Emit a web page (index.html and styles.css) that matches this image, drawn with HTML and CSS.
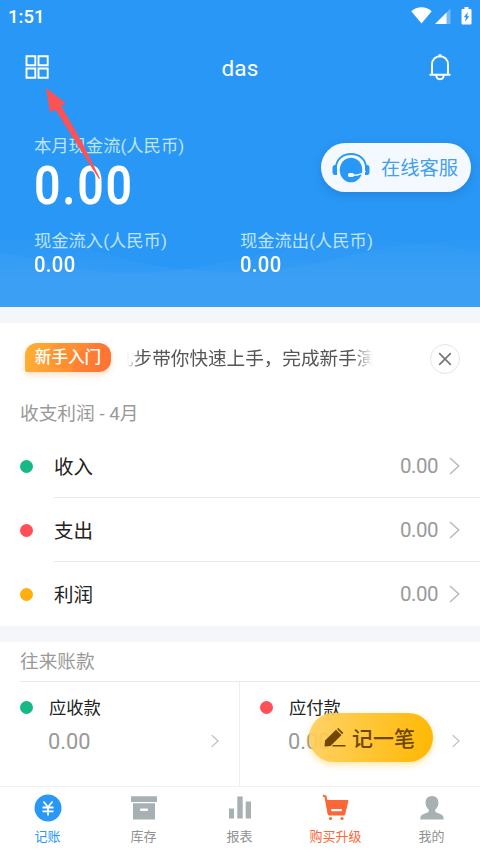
FILE: index.html
```html
<!DOCTYPE html>
<html lang="zh-CN">
<head>
<meta charset="utf-8">
<title>das</title>
<link rel="stylesheet" href="styles.css">
</head>
<body>
<div class="app">
  <header class="hero">
    <svg class="waves" viewBox="0 0 480 70" preserveAspectRatio="none" aria-hidden="true">
      <defs><linearGradient id="wave" x1="0" y1="0" x2="0" y2="1"><stop offset="0" stop-color="#fff" stop-opacity=".015"/><stop offset=".6" stop-color="#fff" stop-opacity=".045"/></linearGradient></defs>
      <path fill="url(#wave)" d="M0 3C70 3 90 14 130 23C175 34 215 36 260 34C330 29 380 3 480 3V70H0Z"/>
      <path fill="url(#wave)" d="M0 16C55 23 70 36 135 36C220 36 270 4 370 4C420 4 450 10 480 16V70H0Z"/>
    </svg>
    <div class="status">
      <span class="clock">1:51</span>
      <div class="status-icons">
        <svg class="wifi" width="21" height="17" viewBox="0 0 21 17"><path fill="#fff" d="M.3 4.2C6-1 15-1 20.700 4.200L10.500 16.500Z"/></svg>
        <svg class="signal" width="16" height="16" viewBox="0 0 16 16"><path fill="#fff" fill-opacity=".35" d="M10 6 15.500.5V16H10Z"/><path fill="#fff" d="M0 16 11.500 4.500V16Z"/></svg>
        <svg width="11" height="18" viewBox="0 0 11 18"><path fill="#fff" d="M3.500 0h4v2H9.500Q10.500 2 10.500 3V16.500Q10.500 17.500 9.500 17.500H1.500Q.5 17.500.5 16.500V3Q.5 2 1.500 2h2Z"/><path fill="#2997f5" d="M6.800 5 2.800 10.300H5L4 14.800 8.300 9.300H6.100Z"/></svg>
      </div>
    </div>
    <div class="titlebar">
      <svg width="24" height="24" viewBox="0 0 24 24" fill="none" stroke="#fff" stroke-width="1.900"><path d="M1.500 1.200H10.300V10.300H1.500ZM13.500 1.200H22.700V10.300H13.500ZM1.500 13.500H10.300V22.700H1.500ZM13.500 13.500H22.700V22.700H13.500Z"/></svg>
      <h1>das</h1>
      <svg width="22" height="27" viewBox="0 0 22 27" fill="none" stroke="#fff" stroke-width="1.900"><path d="M3 20.500V10.500C3 5.500 6.500 2.300 11 2.300S19 5.500 19 10.500V20.500M.5 20.800H21.500M7.300 21.200C7.300 26.500 14.700 26.500 14.700 21.200"/><circle cx="11" cy="1.700" r="1.600" fill="#fff" stroke="none"/></svg>
    </div>
    <div class="flow">
      <p class="label">本月现金流(人民币)</p>
      <p class="total">0.00</p>
      <div class="flow-split">
        <div><p class="label">现金流入(人民币)</p><p class="amount">0.00</p></div>
        <div><p class="label">现金流出(人民币)</p><p class="amount">0.00</p></div>
      </div>
    </div>
    <a class="service">
      <svg width="38" height="30" viewBox="0 0 38 30"><path fill="none" stroke="#2997f5" stroke-width="1.800" d="M4 14C4.500 6 11 1 19 1S33.500 6 34 14"/><path fill="#2997f5" d="M5 12V22H3Q.5 22 .5 19V15Q.5 12 3 12ZM33 12V22H35Q37.500 22 37.500 19V15Q37.500 12 35 12Z"/><ellipse cx="19" cy="17" rx="11.300" ry="12.300" fill="#2997f5"/><path fill="none" stroke="#f3f9ff" stroke-width="1.500" d="M20 22.200C26 22.500 31 20.500 33.500 18"/><rect x="16" y="20" width="6" height="4" rx="1.500" fill="#f3f9ff"/></svg>
      <span>在线客服</span>
    </a>
    <svg class="pointer" width="58" height="96" viewBox="0 0 58 96"><path fill="#fb5355" d="M2 2.700 22 18.500 17 20.500 39 59 56 93.500 55 94 34 61 11.500 24.500 6 27.500Z"/></svg>
  </header>

  <main>
    <section class="card profit">
      <div class="guide">
        <span class="badge">新手入门</span>
        <div class="marquee"><span>几步带你快速上手，完成新手演</span></div>
        <span class="close"><svg width="14" height="14" viewBox="0 0 14 14" fill="none" stroke="#777" stroke-width="1.700"><path d="M1.200 1.200 12.800 12.800M12.800 1.200 1.200 12.800"/></svg></span>
      </div>
      <h2>收支利润 - 4月</h2>
      <div class="row"><i class="dot green"></i><div class="row-body"><span class="name">收入</span><span class="value">0.00</span><svg class="chev" viewBox="0 0 11 18"><path d="M1 1 9.700 9 1 17"/></svg></div></div>
      <div class="row"><i class="dot red"></i><div class="row-body"><span class="name">支出</span><span class="value">0.00</span><svg class="chev" viewBox="0 0 11 18"><path d="M1 1 9.700 9 1 17"/></svg></div></div>
      <div class="row"><i class="dot amber"></i><div class="row-body"><span class="name">利润</span><span class="value">0.00</span><svg class="chev" viewBox="0 0 11 18"><path d="M1 1 9.700 9 1 17"/></svg></div></div>
    </section>

    <section class="card accounts">
      <h2>往来账款</h2>
      <div class="pair">
        <div class="account"><div class="account-name"><i class="dot green"></i>应收款</div><div class="account-value"><span>0.00</span><svg class="chev small" viewBox="0 0 11 18"><path d="M1 1 9.700 9 1 17"/></svg></div></div>
        <div class="account"><div class="account-name"><i class="dot red"></i>应付款</div><div class="account-value"><span>0.00</span><svg class="chev small" viewBox="0 0 11 18"><path d="M1 1 9.700 9 1 17"/></svg></div></div>
      </div>
      <a class="record">
        <svg width="22" height="19" viewBox="0 0 22 19" fill="#6f4705"><path d="M.5 18.500 1 12.500 12 1.700 17.500 7 6.500 18ZM13 1 14.200 0 19.300 4.800 18.200 6.200ZM8.500 17H21.500V18.500H8.500Z"/></svg>
        <span>记一笔</span>
      </a>
    </section>
  </main>

  <nav class="tabs">
    <a class="tab active"><svg width="28" height="28" viewBox="0 0 28 28"><circle cx="14" cy="14" r="13.500" fill="#2997f5"/><path fill="none" stroke="#fff" stroke-width="1.800" d="M9.500 7.500 14 13 18.500 7.500M14 13V21.500M8.500 13.500H19.500M8.500 17.300H19.500"/></svg><span>记账</span></a>
    <a class="tab"><svg width="28" height="28" viewBox="0 0 28 28"><path fill="#a7b0b2" d="M1 2.300H27V8H1ZM3 9.300H25V25.500H3Z"/><rect x="10" y="14.500" width="8" height="2.600" rx="1" fill="#fff"/></svg><span>库存</span></a>
    <a class="tab"><svg width="28" height="28" viewBox="0 0 28 28"><path fill="#a7b0b2" d="M3 14.500H8V24.500H3ZM11.300 2.500H16.700V24.500H11.300ZM19.700 7.500H25V24.500H19.700Z"/></svg><span>报表</span></a>
    <a class="tab buy"><svg width="28" height="28" viewBox="0 0 28 28"><path fill="none" stroke="#fb6736" stroke-width="2.200" d="M1 1.500 3.500 2.500 7 20.500"/><path fill="#fb6736" stroke="#fb6736" stroke-linejoin="round" d="M4 6.500H26L22.500 21H6.500Z"/><rect x="9" y="15" width="11" height="2.300" rx="1" fill="#fff"/><circle cx="8.500" cy="24.500" r="1.600" fill="#fb6736"/><circle cx="20" cy="24.500" r="1.600" fill="#fb6736"/></svg><span>购买升级</span></a>
    <a class="tab"><svg width="28" height="28" viewBox="0 0 28 28"><path fill="#a7b0b2" d="M14 2C9.500 2 7.300 5 7.600 9.500C7.800 12.300 9.200 14.500 11 16C11 18 10 18.500 7 19.500C3.500 20.600 2.300 22 2.300 25.500H25.700C25.700 22 24.500 20.600 21 19.500C18 18.500 17 18 17 16C18.800 14.500 20.200 12.300 20.400 9.500C20.700 5 18.500 2 14 2Z"/></svg><span>我的</span></a>
  </nav>
</div>
</body>
</html>
```
FILE: styles.css
```css
* { box-sizing: border-box; margin: 0; padding: 0; }
body {
  width: 480px;
  height: 852px;
  overflow: hidden;
  background: #f5f6fa;
  font-family: Roboto, "Noto Sans CJK SC", sans-serif;
  color: #333;
}
svg { display: block; flex: none; overflow: visible; }
.app { display: flex; flex-direction: column; height: 852px; }

.hero { position: relative; height: 307px; background: #2997f5; color: #fff; }
.waves { position: absolute; left: 0; bottom: 0; width: 480px; height: 70px; }
.status { display: flex; justify-content: space-between; height: 33px; padding: 7px 8px 0 8px; }
.clock { font-size: 18.5px; font-weight: 500; line-height: 20px; }
.status-icons { display: flex; align-items: flex-start; }
.wifi { margin-right: 3px; }
.signal { margin: 1px 10px 0 0; }
.titlebar { display: flex; align-items: center; justify-content: space-between; height: 68px; padding: 0 29px 0 25px; }
.titlebar h1 { font-size: 22.5px; font-weight: 400; line-height: 28px; margin-left: 2px; padding-top: 1px; letter-spacing: .2px; }
.flow { position: relative; padding: 34px 0 0 34px; }
.label { font-size: 17.3px; line-height: 22px; color: #bfe4fd; font-weight: 400; white-space: nowrap; }
.total { font-size: 54px; font-weight: 600; line-height: 58px; letter-spacing: 2px; transform: scaleX(.86); transform-origin: 0 0; }
.flow-split { display: grid; grid-template-columns: 206px 1fr; padding-top: 15px; }
.amount { font-size: 22.5px; font-weight: 500; line-height: 24px; letter-spacing: .4px; transform: scaleX(.9); transform-origin: 0 0; }
.service {
  position: absolute; left: 321px; top: 143px; width: 150px; height: 49px;
  display: flex; align-items: center; gap: 11px; padding-left: 11px;
  border-radius: 25px; background: #f3f9ff; box-shadow: 0 3px 9px rgba(20, 90, 170, .3);
  color: #459fea; font-size: 19.3px; white-space: nowrap;
}
.service span { margin-top: -1px; }
.pointer { position: absolute; left: 44px; top: 85px; }

.card { position: relative; background: #fff; }
.profit { margin-top: 16px; height: 303px; }
.guide { display: flex; align-items: center; height: 72px; padding: 0 20px 0 25px; }
.badge {
  width: 86px; height: 29px; line-height: 30px; text-align: center; margin-top: -4px;
  border-radius: 12px 12px 12px 2px; color: #fff; font-size: 16.6px; font-weight: 500;
  background: radial-gradient(circle at 74px 27px, rgba(255, 95, 45, .2) 26px, transparent 27px), radial-gradient(circle at 37px 13px, rgba(255, 125, 30, .25) 12px, transparent 13px), linear-gradient(100deg, #ffb033, #ff7536);
  box-shadow: 0 3px 6px rgba(255, 135, 60, .28);
}
.marquee {
  width: 246px; margin-left: 16px; overflow: hidden; display: flex;
  font-size: 18.6px; line-height: 28px; color: #555; white-space: nowrap;
  -webkit-mask-image: linear-gradient(90deg, transparent, #000 14px, #000 225px, transparent);
  mask-image: linear-gradient(90deg, transparent, #000 14px, #000 225px, transparent);
}
.marquee span { margin-left: -12px; }
.close { display: flex; align-items: center; justify-content: center; width: 30px; height: 30px; margin-left: auto; border: 1px solid #e6e6e6; border-radius: 50%; }
.card h2 { padding-left: 20px; color: #999; font-size: 18.7px; font-weight: 400; }
.profit h2 { height: 39px; line-height: 39px; }
.row { display: flex; align-items: center; height: 64px; padding-left: 20px; }
.row-body { flex: 1; display: flex; align-items: center; height: 64px; margin-left: 21px; padding-right: 20px; border-bottom: 1px solid #e9e9eb; }
.row:last-child .row-body { border-bottom: 0; }
.dot { width: 13px; height: 13px; border-radius: 50%; flex: none; }
.green { background: #16b886; }
.red { background: #ff5057; }
.amber { background: #ffaf0f; }
.name { flex: 1; font-size: 19.5px; color: #222; margin-top: -1px; }
.value { color: #999; font-size: 20.5px; letter-spacing: -.5px; }
.chev { width: 11px; height: 18px; margin-left: 11px; fill: none; stroke: #bcbcbe; stroke-width: 1.6; }
.chev.small { width: 8px; height: 14px; margin: 0; }

.accounts { margin-top: 16px; height: 144px; }
.accounts h2 { height: 39px; line-height: 41px; }
.pair { display: grid; grid-template-columns: 219px 1fr; margin-left: 20px; height: 105px; border-top: 1px solid #e9e9eb; }
.account { padding: 11px 20px 0 0; }
.account + .account { border-left: 1px solid #eee; padding-left: 20px; }
.account-name { display: flex; align-items: center; gap: 16px; height: 29px; font-size: 17.3px; line-height: 24px; color: #222; }
.account-value { display: flex; align-items: center; justify-content: space-between; height: 38px; padding-left: 28px; font-size: 21.8px; color: #999; }
.record {
  position: absolute; left: 309px; top: 71px; width: 124px; height: 49px;
  display: flex; align-items: center; gap: 6px; padding-left: 15px;
  border-radius: 25px; color: #6f4705; font-size: 21px; font-weight: 500; white-space: nowrap;
  background: linear-gradient(100deg, rgba(255, 207, 92, .92), #ffb700);
  box-shadow: 0 3px 7px rgba(255, 184, 20, .35);
}
.record span { margin-top: -2px; }

.tabs { display: grid; grid-template-columns: repeat(5, 1fr); height: 66px; background: #fff; border-top: 1px solid #f1f1f2; }
.tab { display: flex; flex-direction: column; align-items: center; padding: 7px 1px 0 0; color: #8e9292; font-size: 13px; line-height: 18px; gap: 6px; }
.active { color: #2997f5; }
.buy { color: #fb6736; }
```
